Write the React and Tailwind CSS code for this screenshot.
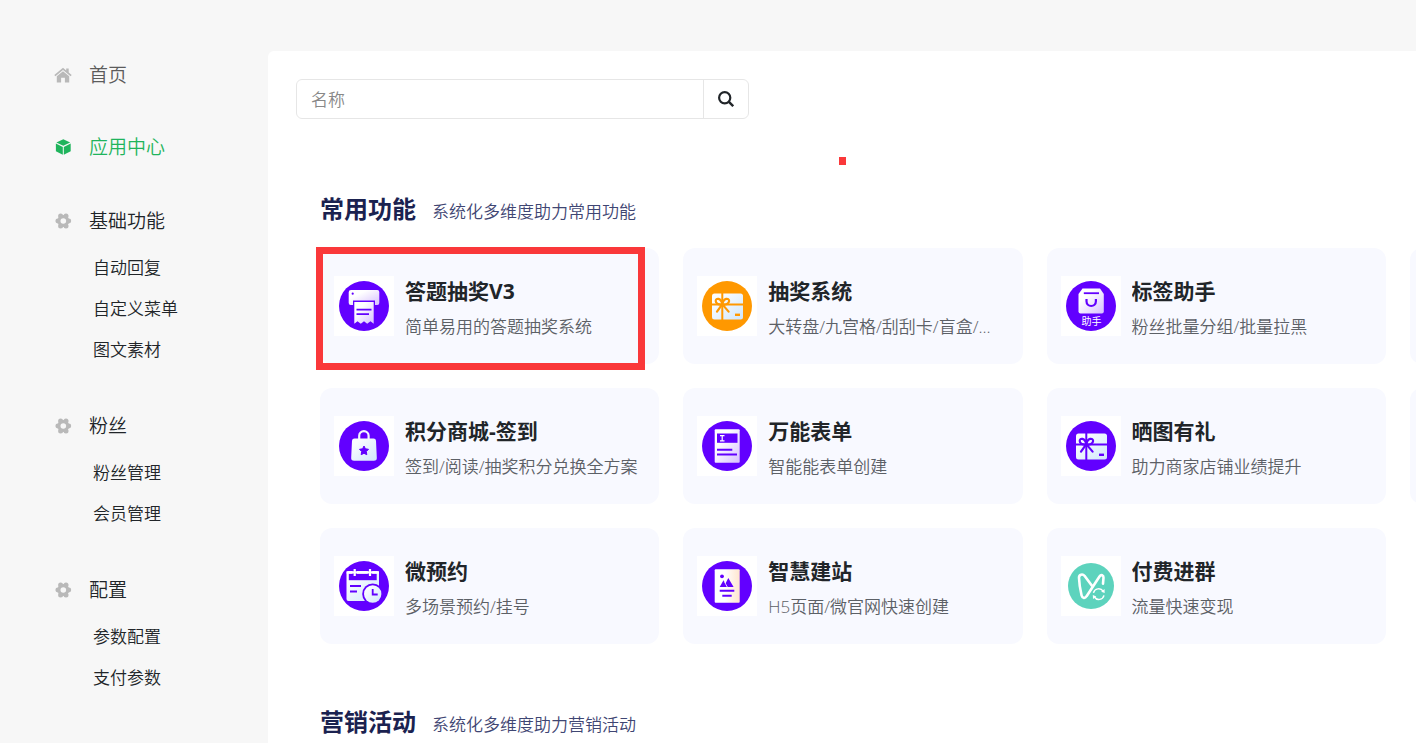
import React, { useState } from 'react';

const menu = [
  { label: '首页', icon: 'home', tone: 'text-[#5c5c5c]', gap: '' },
  { label: '应用中心', icon: 'cube', tone: 'text-[#1fb45c]', gap: 'mt-11' },
  { label: '基础功能', icon: 'gear', tone: 'text-[#212529]', gap: 'mt-[46px]', children: ['自动回复', '自定义菜单', '图文素材'] },
  { label: '粉丝', icon: 'gear', tone: 'text-[#212529]', gap: 'mt-[42px]', children: ['粉丝管理', '会员管理'] },
  { label: '配置', icon: 'gear', tone: 'text-[#212529]', gap: 'mt-[42px]', children: ['参数配置', '支付参数'] },
  { label: '统计', icon: 'gear', tone: 'text-[#212529]', gap: 'mt-[42px]' },
];

const apps = [
  { title: '答题抽奖V3', desc: '简单易用的答题抽奖系统', icon: 'printer', marked: true },
  { title: '抽奖系统', desc: '大转盘/九宫格/刮刮卡/盲盒/...', icon: 'giftOrange' },
  { title: '标签助手', desc: '粉丝批量分组/批量拉黑', icon: 'helper' },
  null,
  { title: '积分商城-签到', desc: '签到/阅读/抽奖积分兑换全方案', icon: 'bag' },
  { title: '万能表单', desc: '智能能表单创建', icon: 'form' },
  { title: '晒图有礼', desc: '助力商家店铺业绩提升', icon: 'giftPurple' },
  null,
  { title: '微预约', desc: '多场景预约/挂号', icon: 'calendar' },
  { title: '智慧建站', desc: 'H5页面/微官网快速创建', icon: 'poster' },
  { title: '付费进群', desc: '流量快速变现', icon: 'group' },
];

const PURPLE = '#6200ff';

function MenuIcon({ name }) {
  if (name === 'home') {
    return (
      <svg viewBox="0 0 18 16" className="w-[18px] h-4 shrink-0" fill="#b9b9b9">
        <path d="M9 4.2 15.2 9.2v6.2h-4.3v-4.6H7.1v4.6H2.8V9.2z" />
        <path d="M9 .8 12.2 3.4V1.6h2.5v3.9l3 2.5-1.1 1.3L9 3.1 1.4 9.3.3 8z" />
      </svg>
    );
  }
  if (name === 'cube') {
    return (
      <svg viewBox="0 0 18 16" className="w-[18px] h-4 shrink-0" fill="#1fb45c">
        <path d="M9.3 .2 16.2 3.4 9.3 6.8 2.4 3.4z" />
        <path d="M1.9 4.6 8.8 7.9v7.8L1.9 12.3z" />
        <path d="M16.7 4.6 9.8 7.9v7.8l6.9-3.4z" />
      </svg>
    );
  }
  return (
    <svg viewBox="0 0 18 16" className="w-[18px] h-4 shrink-0">
      <g fill="#b9b9b9">
        <circle cx="9.3" cy="8" r="6" />
        <circle cx="3.8" cy="8" r="2.4" />
        <circle cx="14.8" cy="8" r="2.4" />
        <circle cx="6.6" cy="3.1" r="2.5" />
        <circle cx="12" cy="3.1" r="2.5" />
        <circle cx="6.6" cy="12.9" r="2.5" />
        <circle cx="12" cy="12.9" r="2.5" />
      </g>
      <circle cx="9.3" cy="8" r="2.8" fill="#f7f7f7" />
    </svg>
  );
}

function GiftCard({ color }) {
  return (
    <>
      <circle cx="30" cy="30" r="25" fill={color} />
      <rect x="15" y="17.5" width="31" height="26" rx="2.5" fill="url(#ice)" />
      <path d="M25.3 17v27M15 28.6h31" stroke={color} strokeWidth="2" fill="none" />
      <path
        d="M25.3 28.4c-3.4.4-6.6-.6-6.6-3.4 0-3.4 5.4-3.2 6.6 3.2 1.2-6.4 6.8-6.6 6.8-3.2 0 2.8-3.4 3.8-6.8 3.4M25 28.6l-5 7M25.6 28.6l6 7"
        stroke={color} strokeWidth="2.2" fill="none" strokeLinecap="round"
      />
      <rect x="38" y="37.6" width="5" height="2.4" fill={color} />
    </>
  );
}

const glyphs = {
  printer: (
    <>
      <circle cx="30" cy="30" r="25" fill={PURPLE} />
      <path d="M17 14h26.3a2 2 0 0 1 2 2v11a2 2 0 0 1-2 2H41v-4.4H19V29h-2.3a2 2 0 0 1-2-2V16.3A2.3 2.3 0 0 1 17 14z" fill="url(#lilac)" />
      <circle cx="18.7" cy="17.7" r="1.1" fill={PURPLE} />
      <path d="M20.3 26h19.4v21.7l-3.2-2.4-3.3 2.4-3.2-2.4-3.2 2.4-3.3-2.4-3.2 2.4z" fill="url(#lilac)" />
      <path d="M22.5 33.7h15M22.5 38.2h12.5" stroke={PURPLE} strokeWidth="1.8" />
    </>
  ),
  giftOrange: <GiftCard color="#ff9800" />,
  giftPurple: <GiftCard color={PURPLE} />,
  helper: (
    <>
      <circle cx="30" cy="30" r="25" fill={PURPLE} />
      <path d="M21.5 12.5H39l3.8 5.5v17.5a2 2 0 0 1-2 2H19.5a2 2 0 0 1-2-2V18z" fill="url(#lilac)" />
      <path d="M22.8 17.2H38" stroke={PURPLE} strokeWidth="1.8" />
      <path d="M25.5 23v2.2c0 6.4 9.4 6.4 9.4 0V23" stroke={PURPLE} strokeWidth="2.2" fill="none" />
      <text x="30.4" y="49.3" fontSize="10" fill="#fff" textAnchor="middle">助手</text>
    </>
  ),
  bag: (
    <>
      <circle cx="30" cy="30" r="25" fill={PURPLE} />
      <path d="M25.2 24v-4.2a4.7 4.7 0 0 1 9.4 0V24" stroke="#f3f6ff" strokeWidth="2.2" fill="none" />
      <path d="M20.5 22.5h19a2.5 2.5 0 0 1 2.5 2.3l.8 16.7a3 3 0 0 1-3 3.3H20.2a3 3 0 0 1-3-3.3l.8-16.7a2.5 2.5 0 0 1 2.5-2.3z" fill="url(#ice)" />
      <path d="m30 30 1.4 2.8 3.1.5-2.2 2.2.5 3.2-2.8-1.4-2.8 1.4.5-3.2-2.2-2.2 3.1-.5z" fill={PURPLE} stroke={PURPLE} strokeLinejoin="round" />
    </>
  ),
  form: (
    <>
      <circle cx="30" cy="30" r="25" fill={PURPLE} />
      <rect x="17.7" y="13.2" width="25" height="33.5" rx="1" fill="url(#lilac)" />
      <rect x="20" y="17.5" width="20.5" height="9.3" fill={PURPLE} />
      <path d="M23 19.7h4.5M23 24.8h4.5M25.2 19.7v5" stroke="#fff" strokeWidth="1.2" />
      <path d="M20 33.7h15.3M20 38.5h20" stroke={PURPLE} strokeWidth="1.9" />
    </>
  ),
  calendar: (
    <>
      <circle cx="30" cy="30" r="25" fill={PURPLE} />
      <rect x="12.5" y="15" width="32.5" height="30" rx="2" fill="url(#ice)" />
      <path d="M14.8 17.8h27.9v6.4H14.8z" fill={PURPLE} />
      <path d="M20.7 12.5v8M36 12.5v8" stroke={PURPLE} strokeWidth="4.4" />
      <path d="M12.5 16.4h32.5" stroke="#fff" strokeWidth="2.2" />
      <path d="M20.7 13v7M36 13v7" stroke="#fff" strokeWidth="2.2" />
      <path d="M16 30h11M16 35.5h7" stroke={PURPLE} strokeWidth="2" />
      <circle cx="38.7" cy="38" r="10.5" fill={PURPLE} />
      <circle cx="38.7" cy="38" r="8.7" fill="url(#ice)" />
      <path d="M38.7 33v5.5h5" stroke={PURPLE} strokeWidth="1.8" fill="none" />
    </>
  ),
  poster: (
    <>
      <circle cx="30" cy="30" r="25" fill={PURPLE} />
      <rect x="17.7" y="13.2" width="25" height="33.5" rx="1" fill="url(#cream)" />
      <circle cx="25" cy="20.3" r="1.9" fill={PURPLE} />
      <path d="m22.7 31 3.8-6.8 2 3.2 2.8-5.4 5.3 9z" fill={PURPLE} />
      <path d="m27.3 25.5 3 5.5" stroke="#fff" strokeWidth=".8" />
      <path d="M22.7 34.8h14.6M25.3 39.8h9.4" stroke={PURPLE} strokeWidth="1.9" />
    </>
  ),
  group: (
    <>
      <circle cx="30" cy="30" r="23" fill="#5dd3bd" />
      <path
        d="M31.5 30.5 23.5 19.8c-1.8-2.2-5.6-1.5-5.5 2 .2 6 1.2 12 2.6 17.7.8 3 3.5 3.2 5 .7l12.9-19.7c1.7-2.5 4.2-1.4 4 1.2l-.5 6"
        stroke="#fff" strokeWidth="2.6" fill="none" strokeLinecap="round" strokeLinejoin="round"
      />
      <path d="M32.5 36.8a5.3 5.3 0 0 1 9.6-1.6M43 39.3a5.3 5.3 0 0 1-9.6 1.7" stroke="#fff" strokeWidth="1.4" fill="none" />
      <path d="m43.5 33 .2 4-3.5-1.2zM32 43l-.2-4 3.5 1.4z" fill="#fff" />
    </>
  ),
};

function AppCard({ app }) {
  if (!app) return <div className="h-[116px] rounded-xl bg-[#f8f9ff]" />;
  return (
    <div className="relative h-[116px] rounded-xl bg-[#f8f9ff] px-3.5 py-7 flex items-start gap-[11px]">
      <svg viewBox="0 0 60 60" className="size-[60px] shrink-0 bg-white">{glyphs[app.icon]}</svg>
      <div className="min-w-0 flex-1">
        <h3 className="text-[21px] leading-[30px] font-bold text-[#212529] truncate">{app.title}</h3>
        <p className="mt-[9px] text-[17px] leading-6 font-[350] text-[#5c6066] whitespace-nowrap">{app.desc}</p>
      </div>
      {app.marked && <span className="absolute -left-1 -top-px right-3.5 -bottom-1.5 border-7 border-[#fa383a]" />}
    </div>
  );
}

function SectionTitle({ title, note }) {
  return (
    <div className="flex items-baseline gap-4">
      <h2 className="text-[24px] leading-8 font-bold text-[#1b2250]">{title}</h2>
      <p className="text-[17px] leading-6 font-[350] text-[#3f4673]">{note}</p>
    </div>
  );
}

export default function App() {
  const [query, setQuery] = useState('');
  const shown = apps.filter(a => !query || (a && a.title.includes(query)));

  return (
    <div className="h-screen overflow-hidden flex bg-[#f7f7f7] font-['Open_Sans','Noto_Sans_CJK_SC',sans-serif]">
      <svg className="absolute size-0" aria-hidden="true">
        <defs>
          <linearGradient id="lilac" x1="0" y1="0" x2="1" y2="1">
            <stop offset=".3" stopColor="#fff" />
            <stop offset="1" stopColor="#d6bfff" />
          </linearGradient>
          <linearGradient id="ice" x1="0" y1="0" x2="1" y2="1">
            <stop offset=".2" stopColor="#fafcff" />
            <stop offset="1" stopColor="#cfe6fb" />
          </linearGradient>
          <linearGradient id="cream">
            <stop offset=".4" stopColor="#fff" />
            <stop offset="1" stopColor="#ffe6cf" />
          </linearGradient>
        </defs>
      </svg>

      <nav className="w-[268px] shrink-0 pt-[61px] pl-[54px]">
        {menu.map(item => (
          <div key={item.label} className={item.gap}>
            <a href="#" className={`flex items-center gap-[17px] text-[19px] leading-7 font-[350] ${item.tone}`}>
              <MenuIcon name={item.icon} />
              {item.label}
            </a>
            {item.children && (
              <ul className="mt-3 pl-[39px]">
                {item.children.map(child => (
                  <li key={child} className="h-[41px] flex items-center">
                    <a href="#" className="text-[17px] leading-6 font-[350] text-[#212529]">{child}</a>
                  </li>
                ))}
              </ul>
            )}
          </div>
        ))}
      </nav>

      <main className="relative flex-1 min-w-0 mt-[51px] bg-white rounded-tl-md pt-7 pl-7 overflow-hidden">
        <form onSubmit={e => e.preventDefault()} className="flex w-[453px] h-10 border border-[#e6e6e6] rounded-md">
          <input type="text" aria-label="名称" placeholder="名称" value={query} onChange={e => setQuery(e.target.value)}
            className="flex-1 min-w-0 px-3.5 pt-0.5 text-[17px] font-[350] text-[#333] placeholder:text-[#888] outline-none" />
          <button type="submit" aria-label="搜索" className="w-[45px] border-l border-[#e6e6e6] flex items-center justify-center">
            <svg viewBox="0 0 16 16" className="size-4" fill="none" stroke="#212529">
              <circle cx="6.7" cy="6.7" r="5.6" strokeWidth="2.2" />
              <path d="m10.7 10.7 4.5 4.5" strokeWidth="2.4" />
            </svg>
          </button>
        </form>
        <span className="absolute left-[571px] top-[106px] w-[7px] h-2 bg-[#fa383a]" />

        <div className="pl-6">
          <section className="mt-[74px]">
            <SectionTitle title="常用功能" note="系统化多维度助力常用功能" />
            <div className="mt-[23px] -mr-[333px] grid grid-cols-4 gap-6">
              {shown.map((app, i) => <AppCard key={i} app={app} />)}
            </div>
          </section>
          <section className="mt-[62px]">
            <SectionTitle title="营销活动" note="系统化多维度助力营销活动" />
          </section>
        </div>
      </main>
    </div>
  );
}
